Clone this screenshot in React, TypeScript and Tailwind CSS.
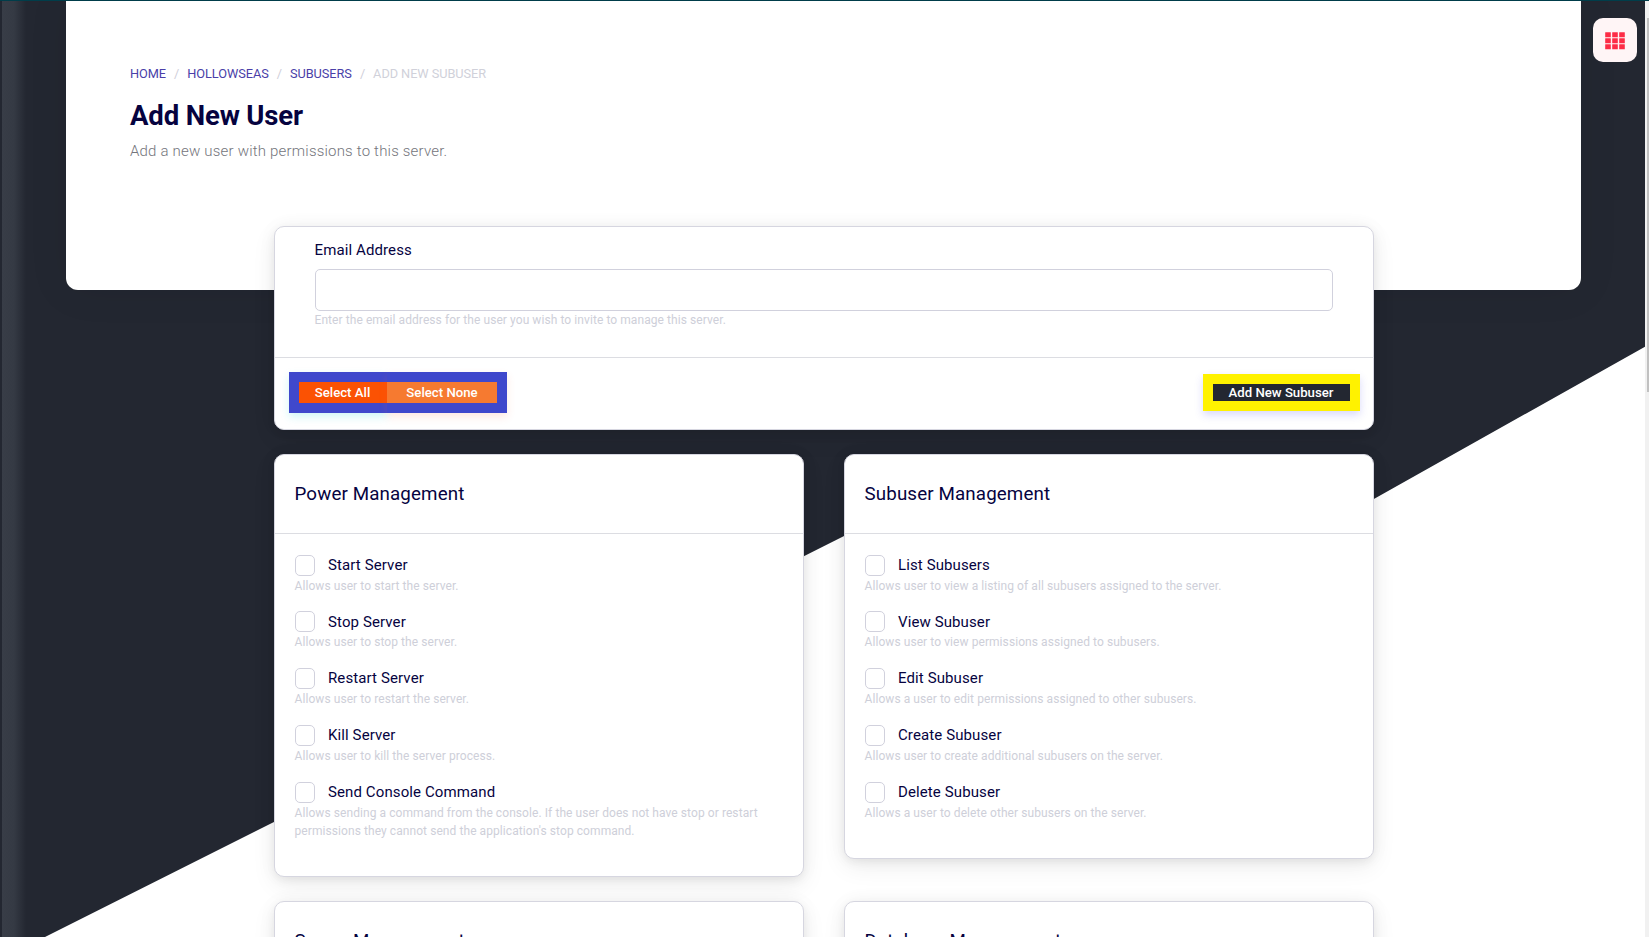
const shadow = "shadow-[0_0_20px_rgba(0,0,0,0.04),0_8px_24px_rgba(0,0,0,0.07),0_3px_8px_rgba(0,0,0,0.05)]";

type Permission = { label: string; hint: string };

const power: Permission[] = [
  { label: "Start Server", hint: "Allows user to start the server." },
  { label: "Stop Server", hint: "Allows user to stop the server." },
  { label: "Restart Server", hint: "Allows user to restart the server." },
  { label: "Kill Server", hint: "Allows user to kill the server process." },
  {
    label: "Send Console Command",
    hint: "Allows sending a command from the console. If the user does not have stop or restart permissions they cannot send the application's stop command.",
  },
];

const subuser: Permission[] = [
  { label: "List Subusers", hint: "Allows user to view a listing of all subusers assigned to the server." },
  { label: "View Subuser", hint: "Allows user to view permissions assigned to subusers." },
  { label: "Edit Subuser", hint: "Allows a user to edit permissions assigned to other subusers." },
  { label: "Create Subuser", hint: "Allows user to create additional subusers on the server." },
  { label: "Delete Subuser", hint: "Allows a user to delete other subusers on the server." },
];

function PermissionCard({ title, items }: { title: string; items: Permission[] }) {
  return (
    <section className={`rounded-[10px] border border-[#d6d6e0] bg-white ${shadow}`}>
      <h2 className="flex h-[79px] items-center border-b border-[#dcdde2] px-[19.5px] text-[18.75px] tracking-[0.13px] text-[#06033f]">
        {title}
      </h2>
      <div className="px-[19.5px] pb-[20.55px] pt-[19.7px]">
        {items.map((item) => (
          <div key={item.label} className="mb-[15.75px]">
            <label className="flex h-[23px] items-center text-[15px] tracking-[0.11px] text-[#06033f]">
              <span className="mr-[13.5px] h-[21px] w-5 rounded-[5px] border border-[#d1d1dd] bg-white" />
              {item.label}
            </label>
            <p className="text-[12px] leading-[18px] tracking-[0.075px] text-[#cecfd9]">{item.hint}</p>
          </div>
        ))}
      </div>
    </section>
  );
}

function Slash() {
  return <span className="text-[#cfcfda]">/</span>;
}

export default function App() {
  return (
    <div className="relative h-[937px] w-[1649px] overflow-hidden bg-white font-['Roboto',sans-serif]">
      <svg className="absolute inset-0" width="1649" height="937" viewBox="0 0 1649 937">
        <defs>
          <linearGradient id="edge" x1="0" x2="1">
            <stop offset="0" stopColor="#383d47" />
            <stop offset="0.5" stopColor="#353a44" />
            <stop offset="1" stopColor="#232731" />
          </linearGradient>
        </defs>
        <path d="M0 0H1645V346.7L1300 540.5L860 528L45 937H0Z" fill="#232731" />
        <rect x="2" y="0" width="24" height="937" fill="url(#edge)" />
      </svg>

      <div className="relative ml-[66px] h-[290px] w-[1515px] rounded-b-[12px] bg-white px-16 pt-[64px] shadow-[0_0_40px_rgba(0,0,0,0.08)]">
        <nav className="flex h-5 items-center gap-2 text-[12.75px] tracking-[-0.05px] text-[#4a3fa8]">
          <a>HOME</a>
          <Slash />
          <a>HOLLOWSEAS</a>
          <Slash />
          <a>SUBUSERS</a>
          <Slash />
          <span className="text-[#d0d1da]">ADD NEW SUBUSER</span>
        </nav>
        <h1 className="mt-[14px] text-[27.5px] font-bold leading-9 tracking-[-0.15px] text-[#06033f]">Add New User</h1>
        <p className="mt-[5px] text-[15px] font-light leading-6 tracking-[0.2px] text-[#74757c]">
          Add a new user with permissions to this server.
        </p>
      </div>

      <main className="relative -mt-16 ml-[274px] w-[1100px]">
        <section className={`h-[204px] rounded-[10px] border border-[#d6d6e0] bg-white ${shadow}`}>
          <div className="h-[131px] border-b border-[#dcdde2] px-10 pt-3">
            <label className="-ml-[0.5px] block text-[15px] leading-[22px] tracking-[0.11px] text-[#06033f]">Email Address</label>
            <input className="mt-2 block h-[42px] w-full rounded-[5px] border border-[#d1d1dd] bg-white outline-none" />
            <p className="-ml-[0.5px] text-[12px] leading-[18px] tracking-[0.075px] text-[#cecfd9]">
              Enter the email address for the user you wish to invite to manage this server.
            </p>
          </div>
          <div className="flex items-start justify-between pl-[14px] pr-[13px] pt-[14px] text-[13.2px] font-medium text-white">
            <div className="flex">
              <button className="h-[41px] w-[98px] border-y-[10px] border-l-[10px] border-[#3f48cc] bg-[#fb5203] shadow-[0_4px_8px_rgba(40,220,220,0.22)]">
                <span className="-ml-px block leading-[21px]">Select All</span>
              </button>
              <button className="h-[41px] w-[120px] border-y-[10px] border-r-[10px] border-[#3f48cc] bg-[#f67a30] shadow-[0_4px_8px_rgba(255,100,60,0.15)]">
                <span className="block leading-[21px]">Select None</span>
              </button>
            </div>
            <button className="mt-[2px] h-[37px] w-[157px] border-[10px] border-[#fff200] bg-[#232731] shadow-[0_4px_8px_rgba(80,80,230,0.22)]">
              <span className="-ml-px block leading-[17px]">Add New Subuser</span>
            </button>
          </div>
        </section>

        <div className="mt-6 grid grid-cols-[530px_530px] items-start gap-x-10 gap-y-6">
          <PermissionCard title="Power Management" items={power} />
          <PermissionCard title="Subuser Management" items={subuser} />
          <PermissionCard title="Server Management" items={[]} />
          <PermissionCard title="Database Management" items={[]} />
        </div>
      </main>

      <button className="absolute left-[1593px] top-[18px] flex h-11 w-11 items-center justify-center rounded-[10px] bg-[#fff5f6] pt-0.5">
        <svg width="20" height="18" viewBox="0 0 20 18" fill="#fd2c46">
          {[0, 6, 12].map((y) =>
            [0, 7, 14].map((x) => <rect key={`${x}-${y}`} x={x + 0.2} y={y + 0.3} width="5.6" height="5" rx="0.3" />)
          )}
        </svg>
      </button>

      <div className="absolute right-0 top-0 h-full w-1 bg-[#f1f1f1]">
        <div className="ml-0.5 mt-[18px] h-[374px] w-0.5 bg-[#c1c1c1]" />
      </div>
      <div className="absolute left-0 top-0 h-px w-full bg-[#003d4a]" />
    </div>
  );
}
